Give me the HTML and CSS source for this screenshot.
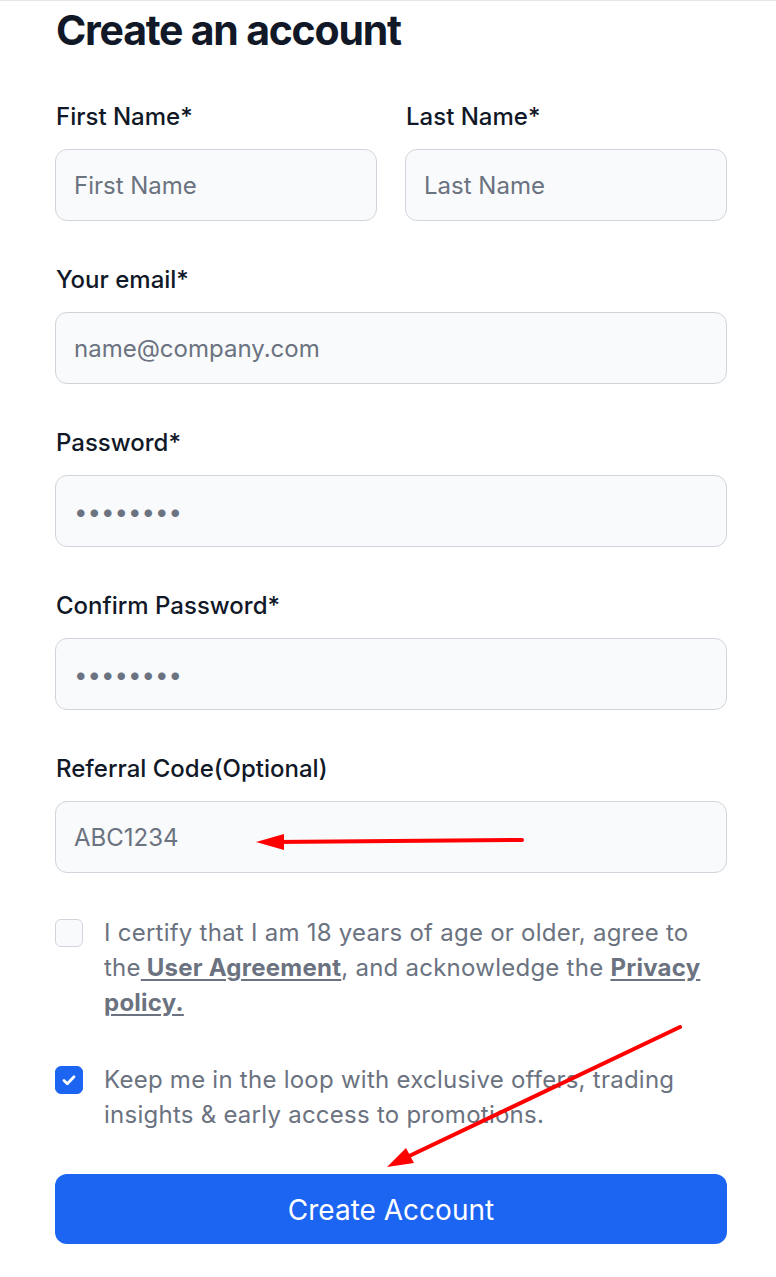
FILE: index.html
```html
<!DOCTYPE html>
<html lang="en">
<head>
<meta charset="utf-8">
<title>Create an account</title>
<link rel="stylesheet" href="styles.css">
</head>
<body>
<div class="page">
  <form class="form">
    <h1 class="title">Create an account</h1>
    <div class="row">
      <div class="field">
        <label class="label">First Name*</label>
        <input class="input" type="text" placeholder="First Name">
      </div>
      <div class="field">
        <label class="label">Last Name*</label>
        <input class="input" type="text" placeholder="Last Name">
      </div>
    </div>
    <div class="field">
      <label class="label">Your email*</label>
      <input class="input" type="email" placeholder="name@company.com">
    </div>
    <div class="field">
      <label class="label">Password*</label>
      <input class="input" type="password" placeholder="••••••••">
    </div>
    <div class="field">
      <label class="label">Confirm Password*</label>
      <input class="input" type="password" placeholder="••••••••">
    </div>
    <div class="field">
      <label class="label">Referral Code(Optional)</label>
      <input class="input" type="text" placeholder="ABC1234">
    </div>
    <div class="check-row">
      <span class="box"></span>
      <p class="check-text">I certify that I am 18 years of age or older, agree to the<a class="link" href="#"> User Agreement</a>, and acknowledge the <a class="link" href="#">Privacy policy.</a></p>
    </div>
    <div class="check-row">
      <span class="box box-on"><svg viewBox="0 0 20 20" width="20" height="20"><path d="M5 10.5l3.3 3.3L15 6.8" fill="none" stroke="#fff" stroke-width="2.8" stroke-linecap="round" stroke-linejoin="round"/></svg></span>
      <p class="check-text">Keep me in the loop with exclusive offers, trading insights &amp; early access to promotions.</p>
    </div>
    <button class="submit" type="button">Create Account</button>
  </form>
  <svg class="annot" width="776" height="1277" viewBox="0 0 776 1277">
    <line x1="522" y1="839" x2="275" y2="841" stroke="#ff0000" stroke-width="4" stroke-linecap="round"/>
    <polygon points="256,841 284,833 284,849" fill="#ff0000"/>
    <line x1="680" y1="1026" x2="405" y2="1157" stroke="#ff0000" stroke-width="4" stroke-linecap="round"/>
    <polygon points="387,1166 406,1147 414,1162" fill="#ff0000"/>
  </svg>
</div>
</body>
</html>
```

FILE: styles.css
```css
* { box-sizing: border-box; }
html, body { margin: 0; padding: 0; background: #ffffff; }
body {
  font-family: Inter, "Noto Sans", "Liberation Sans", sans-serif;
  color: #111827;
}
.page {
  position: relative;
  border-top: 1px solid #e5e7eb;
  width: 776px;
  min-height: 1277px;
  padding: 4px 49px 0 55px;
}
.form {
  display: flex;
  flex-direction: column;
  gap: 40px;
  width: 672px;
}
.title {
  margin: 0 0 3px 1px;
  font-size: 41px;
  line-height: 50px;
  font-weight: 700;
  letter-spacing: -0.03em;
  color: #111827;
}
.row {
  display: grid;
  grid-template-columns: 1fr 1fr;
  column-gap: 28px;
}
.field {
  display: flex;
  flex-direction: column;
  gap: 15px;
}
.label {
  font-size: 24px;
  line-height: 36px;
  font-weight: 500;
  color: #111827;
  padding-left: 1px;
  padding-top: 1px;
  margin-bottom: -1px;
}
.input {
  height: 72px;
  width: 100%;
  border: 1px solid #d1d5db;
  border-radius: 12px;
  background: #f9fafb;
  padding: 0 18px;
  font-family: inherit;
  font-size: 24px;
  color: #111827;
  outline: none;
}
.input::placeholder { color: #6b7280; opacity: 1; }
.check-row {
  display: flex;
  align-items: flex-start;
  gap: 21px;
  margin-top: 2px;
}
.box {
  flex: none;
  width: 28px;
  height: 28px;
  margin-top: 4px;
  border: 1px solid #d1d5db;
  border-radius: 6px;
  background: #f9fafb;
  display: flex;
  align-items: center;
  justify-content: center;
}
.box-on {
  background: #1c64f2;
  border-color: #1c64f2;
}
.check-text {
  margin: 0;
  font-size: 24px;
  line-height: 35px;
  letter-spacing: 0.25px;
  color: #6b7280;
}
.link {
  color: #6b7280;
  font-weight: 700;
  text-decoration: underline;
  text-underline-offset: 3px;
}
.submit {
  height: 70px;
  width: 100%;
  margin-top: 2px;
  padding-top: 2px;
  border: none;
  border-radius: 12px;
  background: #1c64f2;
  color: #ffffff;
  font-family: inherit;
  font-size: 28px;
  font-weight: 400;
}
.annot {
  position: absolute;
  left: 0;
  top: 0;
  pointer-events: none;
}
```
